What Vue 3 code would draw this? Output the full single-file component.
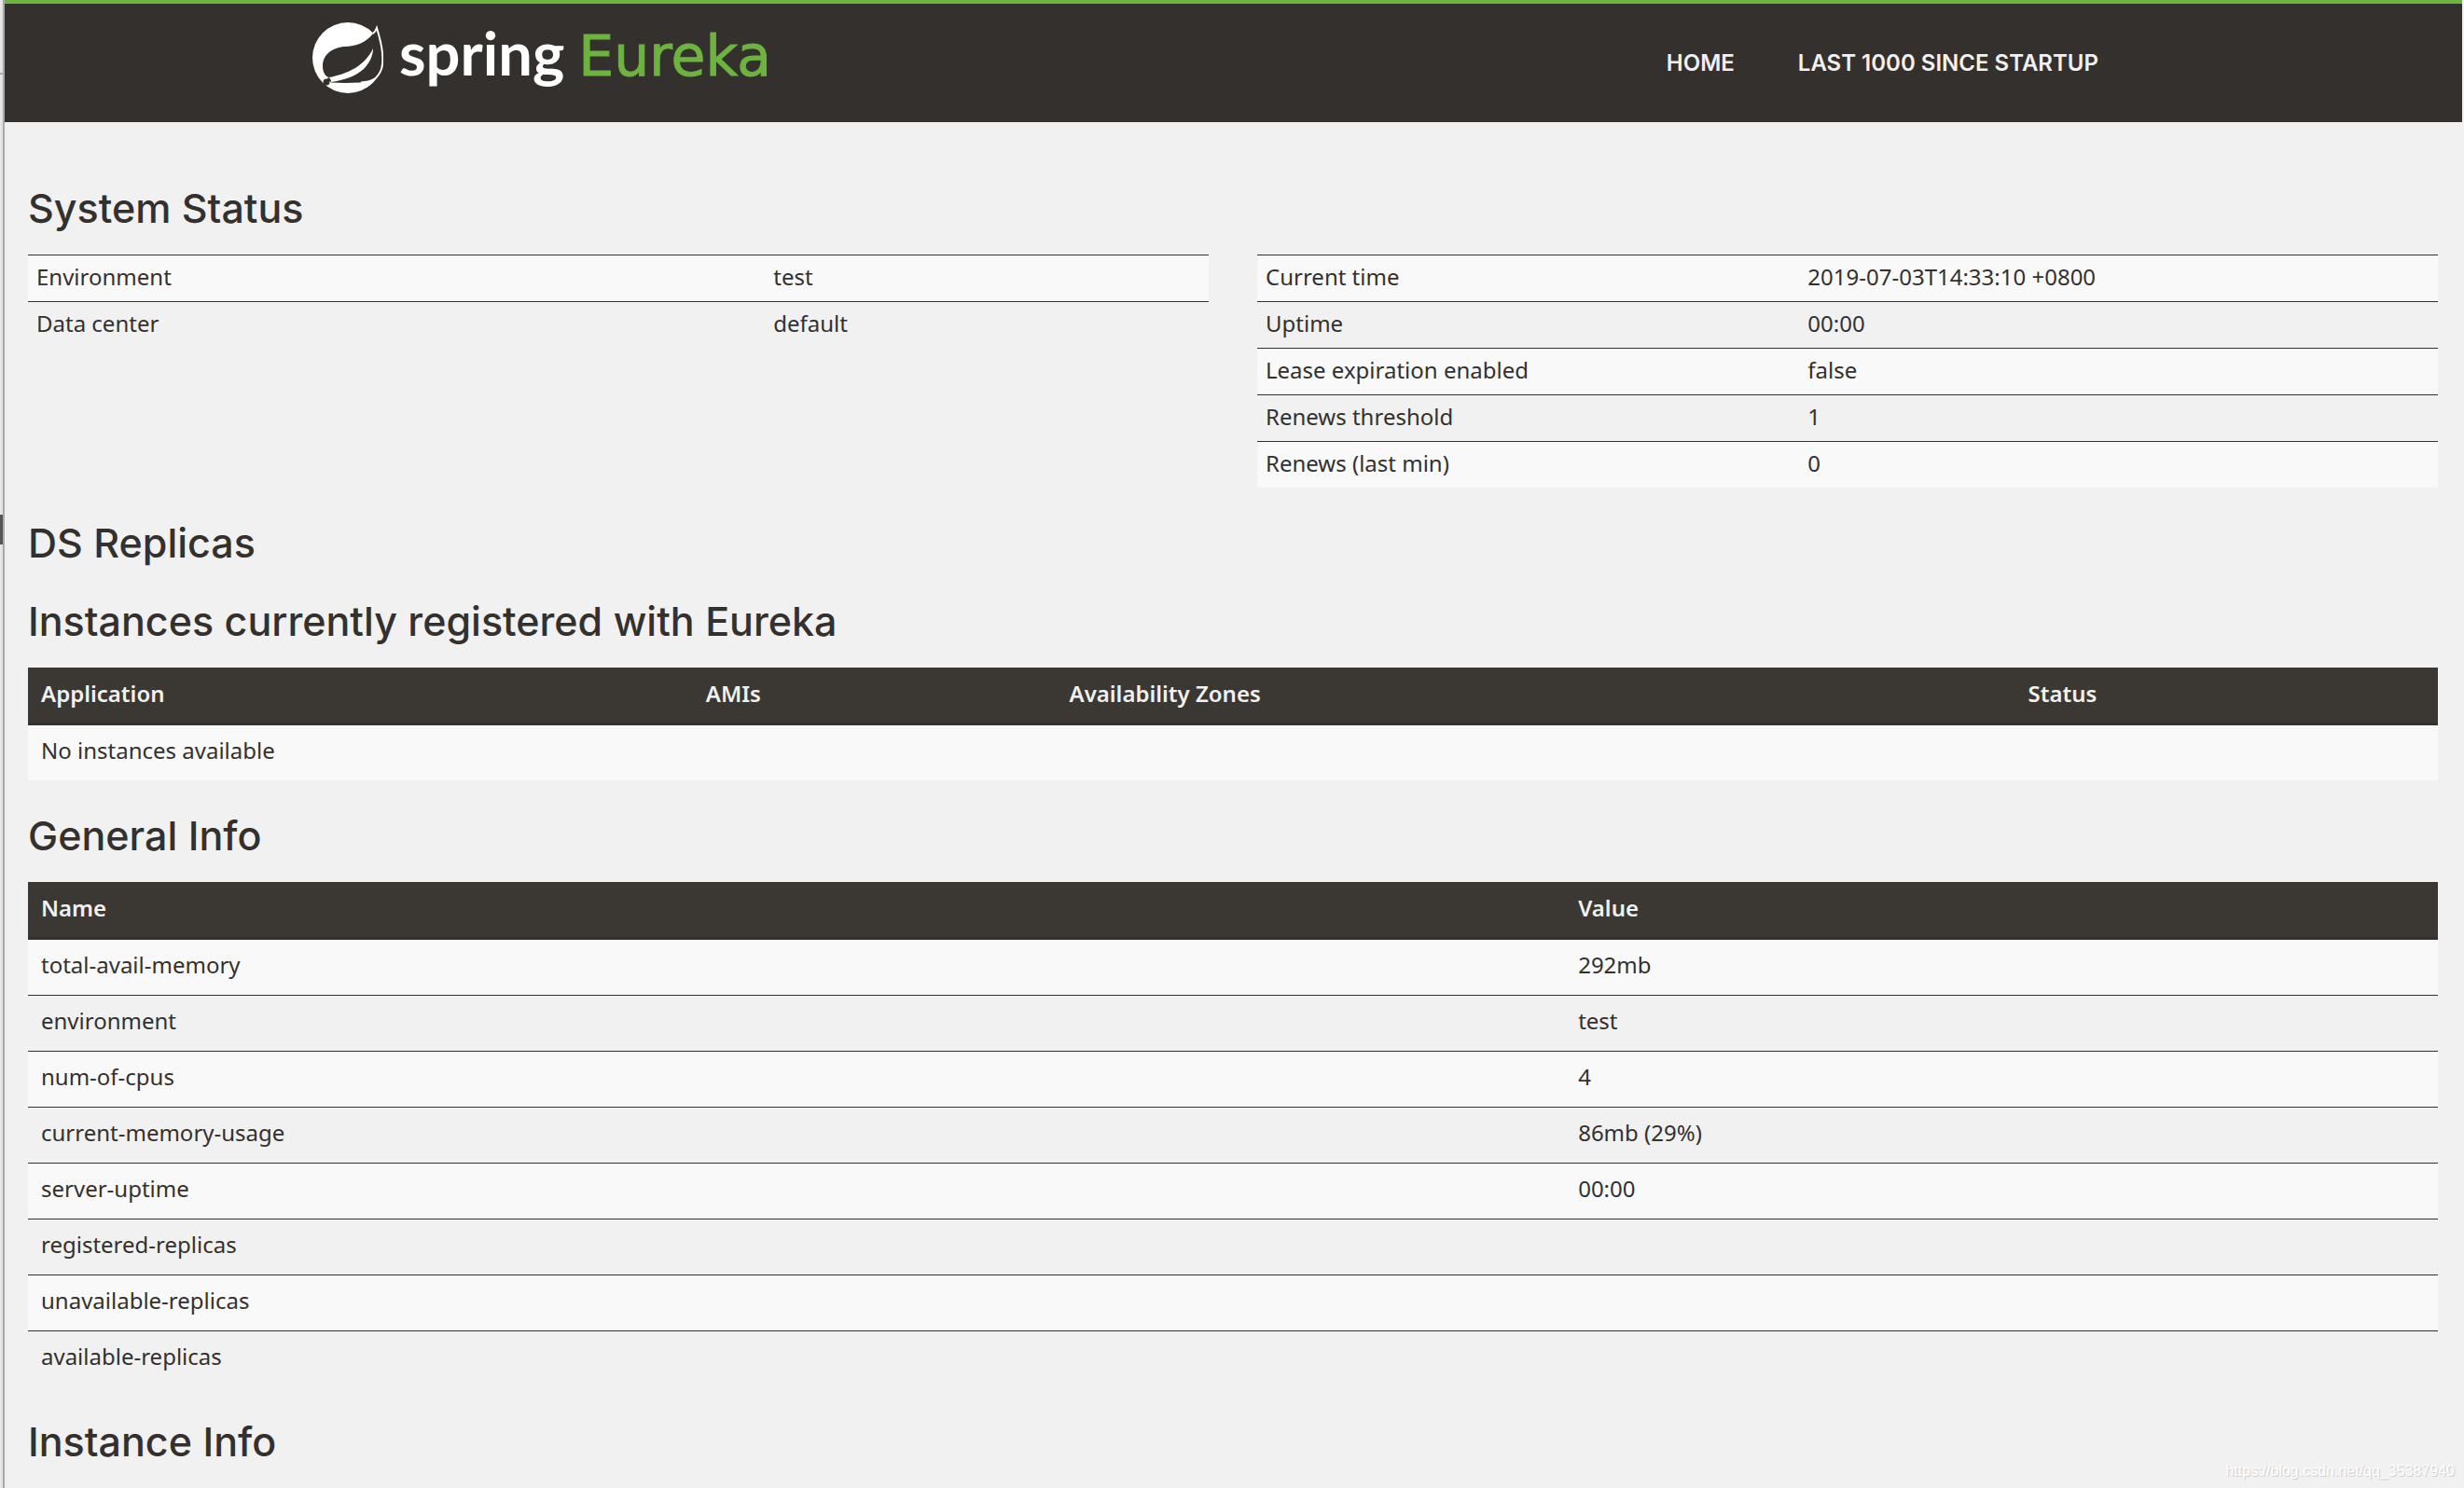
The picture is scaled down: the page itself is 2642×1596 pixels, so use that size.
<template>
  <div class="window">
    <div class="window-edge">
      <span class="edge-line"></span>
      <span class="edge-mark"></span>
    </div>
    <div class="page">
      <header class="navbar">
        <a class="brand" href="#" aria-label="Spring Eureka">
          <svg class="brand-leaf" viewBox="0 0 76 76" width="76" height="76" aria-hidden="true">
            <circle cx="38" cy="38" r="38" fill="#fff" />
            <path
              d="M69 5L80 0V54H73C68 62 60 64 51 64.500C41 65 30 65 20 64.500L16 61C15 60 18 59 18 59C13 58 11 52 11 47C11 34 22 27 34 26C47 26 58 21 65 12Z"
              fill="#34302d"
            />
            <path d="M65 12Q68 9 69 6C74 22 77 40 74 50C70 61 63 64 52 64.500" fill="none" stroke="#fff" stroke-width="2" />
            <path d="M74 50C70 61 63 64 52 64.500L58 70Q69 62 74 50Z" fill="#fff" />
            <path d="M65 28C65 35 62 43 55 50C46 58 34 62 20 64C20 61 19 61 18 59C38 55 56 47 65 28Z" fill="#fff" />
            <circle cx="15" cy="64" r="3.500" fill="#34302d" />
          </svg>
          <span class="brand-spring">spring</span>
          <span class="brand-eureka">Eureka</span>
        </a>
        <nav class="nav-links">
          <a href="#">HOME</a>
          <a href="#">LAST 1000 SINCE STARTUP</a>
        </nav>
      </header>

      <main class="content">
        <h1>System Status</h1>
        <div class="status-row">
          <table class="status-table environment">
            <tbody>
              <tr v-for="row in environment" :key="row.name">
                <td>{{ row.name }}</td>
                <td>{{ row.value }}</td>
              </tr>
            </tbody>
          </table>
          <table class="status-table runtime">
            <tbody>
              <tr v-for="row in runtime" :key="row.name">
                <td>{{ row.name }}</td>
                <td>{{ row.value }}</td>
              </tr>
            </tbody>
          </table>
        </div>

        <h1>DS Replicas</h1>

        <h1>Instances currently registered with Eureka</h1>
        <table class="data-table instances">
          <thead>
            <tr>
              <th class="col-app">Application</th>
              <th class="col-amis">AMIs</th>
              <th class="col-zones">Availability Zones</th>
              <th>Status</th>
            </tr>
          </thead>
          <tbody>
            <tr>
              <td colspan="4">No instances available</td>
            </tr>
          </tbody>
        </table>

        <h1>General Info</h1>
        <table class="data-table general">
          <thead>
            <tr>
              <th class="col-name">Name</th>
              <th>Value</th>
            </tr>
          </thead>
          <tbody>
            <tr v-for="row in generalInfo" :key="row.name">
              <td>{{ row.name }}</td>
              <td>{{ row.value }}</td>
            </tr>
          </tbody>
        </table>

        <h1 class="last">Instance Info</h1>
      </main>
    </div>
    <div class="watermark">https://blog.csdn.net/qq_35387940</div>
  </div>
</template>

<script setup>
const environment = [
  { name: 'Environment', value: 'test' },
  { name: 'Data center', value: 'default' },
];

const runtime = [
  { name: 'Current time', value: '2019-07-03T14:33:10 +0800' },
  { name: 'Uptime', value: '00:00' },
  { name: 'Lease expiration enabled', value: 'false' },
  { name: 'Renews threshold', value: '1' },
  { name: 'Renews (last min)', value: '0' },
];

const generalInfo = [
  { name: 'total-avail-memory', value: '292mb' },
  { name: 'environment', value: 'test' },
  { name: 'num-of-cpus', value: '4' },
  { name: 'current-memory-usage', value: '86mb (29%)' },
  { name: 'server-uptime', value: '00:00' },
  { name: 'registered-replicas', value: '' },
  { name: 'unavailable-replicas', value: '' },
  { name: 'available-replicas', value: '' },
];
</script>

<style>
body {
  margin: 0;
  background: #f1f1f1;
}
</style>

<style scoped>
.window {
  position: relative;
  display: flex;
  min-height: 100vh;
  padding-right: 2px;
  box-sizing: border-box;
  background: #f1f1f1;
  color: #34302d;
  font-family: 'Noto Sans', sans-serif;
  font-size: 24px;
  line-height: 36px;
}

.window-edge {
  position: relative;
  flex: none;
  width: 3px;
  border-right: 2px solid #aaaaaa;
  background: linear-gradient(to right, #ebebeb, #dcdcdc);
}

.edge-line {
  position: absolute;
  top: 78px;
  left: 0;
  width: 5px;
  height: 2px;
  background: #aaaaaa;
}

.edge-mark {
  position: absolute;
  top: 552px;
  left: 0;
  width: 3px;
  height: 32px;
  background: #555555;
}

.page {
  flex: 1;
  min-width: 0;
}

.navbar {
  display: flex;
  align-items: center;
  justify-content: space-between;
  height: 127px;
  padding: 0 390px 0 330px;
  border-top: 4px solid #6db33f;
  background: #34302d;
}

.brand {
  display: flex;
  align-items: baseline;
  padding-bottom: 12px;
  text-decoration: none;
  line-height: 64px;
}

.brand-leaf {
  align-self: flex-start;
  margin-right: 17px;
}

.brand-spring {
  margin-right: 15px;
  color: #ffffff;
  font-family: Lato, sans-serif;
  font-size: 65px;
  font-weight: 700;
}

.brand-eureka {
  color: #6db33f;
  font-family: 'DejaVu Sans', sans-serif;
  font-size: 60px;
  -webkit-text-stroke: 1px #6db33f;
}

.nav-links {
  display: flex;
  gap: 68px;
}

.nav-links a {
  color: #f1f1f1;
  font-family: Inter, sans-serif;
  font-size: 24px;
  font-weight: 600;
  text-decoration: none;
}

.content {
  padding: 64px 26px 0 25px;
}

h1 {
  margin: 0 0 22px;
  font-family: Inter, sans-serif;
  font-size: 43px;
  font-weight: 500;
  line-height: 56px;
}

h1 + h1 {
  margin-top: 28px;
}

h1.last {
  margin-bottom: 0;
}

table {
  width: 100%;
  border-collapse: collapse;
  table-layout: fixed;
}

th,
td {
  text-align: left;
  vertical-align: top;
}

tbody tr:nth-child(odd) {
  background: #f9f9f9;
}

.status-row {
  display: grid;
  grid-template-columns: 1fr 1fr;
  align-items: start;
  gap: 52px;
  margin-bottom: 31px;
}

.status-table td {
  height: 36px;
  padding: 5px 9px 8px;
  border-top: 1px solid #34302d;
}

.environment td:first-child {
  width: 61%;
}

.runtime td:first-child {
  width: 44.5%;
}

.data-table {
  margin-bottom: 31px;
}

.data-table th {
  height: 36px;
  padding: 10px 14px 13px;
  border-bottom: 3px solid #34302d;
  background: #3b3834;
  color: #f1f1f1;
  font-weight: 600;
}

.data-table td {
  height: 36px;
  padding: 9px 14px 14px;
}

.data-table tr + tr td {
  border-top: 1px solid #34302d;
}

.col-app {
  width: 26.5%;
}

.col-amis {
  width: 14%;
}

.col-zones {
  width: 38.7%;
}

.col-name {
  width: 62.7%;
}

.watermark {
  position: absolute;
  right: 10px;
  bottom: 6px;
  color: #ffffff;
  font-family: 'Liberation Sans', sans-serif;
  font-size: 16px;
  line-height: 24px;
  text-shadow: 1px 1px 1px #c8c8c8;
}
</style>
